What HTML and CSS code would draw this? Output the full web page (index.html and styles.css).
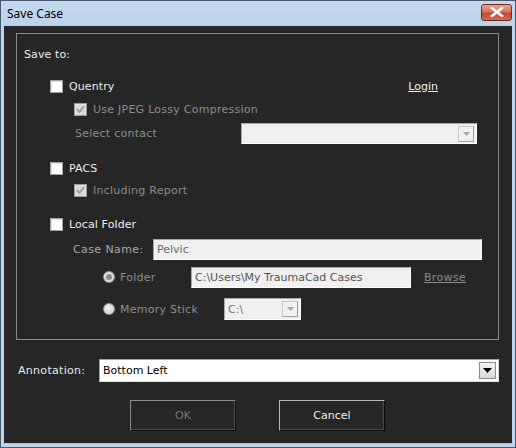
FILE: index.html
```html
<!DOCTYPE html>
<html>
<head>
<meta charset="utf-8">
<link rel="stylesheet" href="styles.css">
</head>
<body>
<div class="window">
  <div class="titlebar">
    <span class="title">Save Case</span>
    <span class="close"><svg width="14" height="10" viewBox="0 0 14 10"><path d="M2 1 L12 9 M12 1 L2 9" stroke="#fff" stroke-width="2.6" stroke-linecap="square"/></svg></span>
  </div>
  <div class="client">
    <div class="group">
      <div class="row r-saveto"><span class="label">Save to:</span></div>
      <div class="row r-quentry">
        <span class="cb"></span><span class="label">Quentry</span>
        <span class="link">Login</span>
      </div>
      <div class="row r-jpeg">
        <span class="cb dis"><svg width="11" height="11" viewBox="0 0 11 11"><path d="M2 5 L4.5 8 L9 2" stroke="#9a9a9a" stroke-width="1.8" fill="none"/></svg></span><span class="label dim">Use JPEG Lossy Compression</span>
      </div>
      <div class="row r-contact">
        <span class="label dim w-contact">Select contact</span>
        <span class="combo c-contact"><span class="combo-btn"><svg width="7" height="4" viewBox="0 0 7 4"><path d="M0 0 H7 L3.5 4 Z" fill="#a8a8a8"/></svg></span></span>
      </div>
      <div class="row r-pacs">
        <span class="cb"></span><span class="label">PACS</span>
      </div>
      <div class="row r-incl">
        <span class="cb dis"><svg width="11" height="11" viewBox="0 0 11 11"><path d="M2 5 L4.5 8 L9 2" stroke="#9a9a9a" stroke-width="1.8" fill="none"/></svg></span><span class="label dim">Including Report</span>
      </div>
      <div class="row r-local">
        <span class="cb"></span><span class="label">Local Folder</span>
      </div>
      <div class="row r-case">
        <span class="label dim2 w-case">Case Name:</span>
        <span class="field f-case">Pelvic</span>
      </div>
      <div class="row r-folder">
        <span class="radio sel"></span><span class="label dim w-folder">Folder</span>
        <span class="field f-folder">C:\Users\My TraumaCad Cases</span>
        <span class="link dimlink">Browse</span>
      </div>
      <div class="row r-mem">
        <span class="radio"></span><span class="label dim w-mem">Memory Stick</span>
        <span class="combo c-mem"><span class="combo-text">C:\</span><span class="combo-btn"><svg width="7" height="4" viewBox="0 0 7 4"><path d="M0 0 H7 L3.5 4 Z" fill="#a8a8a8"/></svg></span></span>
      </div>
    </div>
    <div class="annot">
      <span class="label w-annot">Annotation:</span>
      <span class="combo c-annot"><span class="combo-text">Bottom Left</span><span class="combo-btn dark"><svg width="9" height="5" viewBox="0 0 9 5"><path d="M0 0 H9 L4.5 5 Z" fill="#000"/></svg></span></span>
    </div>
    <div class="buttons">
      <span class="btn disabled">OK</span>
      <span class="btn">Cancel</span>
    </div>
  </div>
</div>
</body>
</html>
```
FILE: styles.css
```css
html, body { margin: 0; padding: 0; background: #262626; }
.window {
  width: 516px; height: 448px; box-sizing: border-box;
  display: flex; flex-direction: column;
  background: #bcd4ec;
  border: 1px solid #4a5a6a;
  font-family: "DejaVu Sans", Verdana, sans-serif;
  font-size: 11px;
}
.titlebar {
  height: 25px; display: flex; align-items: center; justify-content: space-between;
  padding: 0 3px 0 6px;
  background: linear-gradient(#c4daf0, #bad2ea);
}
.title { font-family: "Noto Sans", "Segoe UI", sans-serif; font-size: 12px; color: #000; margin-top: -1px; }
.close {
  width: 31px; height: 17px; margin-top: -3px; box-sizing: border-box;
  display: flex; align-items: center; justify-content: center;
  border: 1px solid #6e2a22; border-radius: 3px;
  background: linear-gradient(#e8a493 0%, #d5765e 45%, #c04a30 55%, #d26a50 100%);
}
.client {
  flex: 1; margin: 0 3px 3px 3px; background: #262626;
  display: flex; flex-direction: column;
  border-bottom: 1px solid #8fd0e0;
}
.group {
  margin: 7px 13px 0 12px; border: 1px solid #8a8a8a;
  height: 307px; box-sizing: border-box;
  padding: 10px 0 0 0; display: flex; flex-direction: column;
}
.row { display: flex; align-items: center; height: 20px; flex: none; }
.label { color: #ececec; white-space: nowrap; letter-spacing: 0.1px; }
.dim { color: #8c8c8c; letter-spacing: 0.25px; }
.dim2 { color: #a8a8a8; letter-spacing: 0.4px; }
.r-saveto { padding-left: 7px; }
.r-quentry { margin-top: 12px; padding-left: 33px; }
.r-jpeg { margin-top: 3px; padding-left: 57px; }
.r-contact { margin-top: 4px; padding-left: 58px; height: 21px; }
.r-pacs { margin-top: 14px; padding-left: 33px; }
.r-incl { margin-top: 2px; padding-left: 57px; }
.r-local { margin-top: 14px; padding-left: 33px; }
.r-case { margin-top: 5px; padding-left: 56px; }
.r-folder { margin-top: 8px; padding-left: 86px; }
.r-mem { margin-top: 11px; padding-left: 86px; height: 22px; }
.cb {
  width: 13px; height: 13px; box-sizing: border-box; flex: none;
  background: #fff; border: 1px solid #a0a0a0;
  box-shadow: inset 1px 1px 0 #e4e4e4;
  margin-right: 6px; display: flex; align-items: center; justify-content: center;
}
.cb.dis { background: #dcdcdc; border-color: #9a9a9a; }
.radio {
  width: 12px; height: 12px; border-radius: 50%; flex: none; box-sizing: border-box;
  background: radial-gradient(circle at 40% 40%, #f4f4f4, #c8c8c8);
  border: 1px solid #9a9a9a; margin-right: 5px; position: relative;
}
.radio.sel::after {
  content: ""; position: absolute; left: 2px; top: 2px; width: 6px; height: 6px;
  border-radius: 50%; background: #8a8a8a;
}
.link { color: #f2f2f2; text-decoration: underline; margin-left: auto; margin-right: 60px; }
.dimlink { color: #8a8a8a; margin-left: 13px; margin-right: 0; letter-spacing: 0.3px; }
.w-contact { width: 166px; }
.w-case { width: 80px; }
.w-folder { width: 71px; }
.w-mem { width: 104px; }
.combo {
  display: flex; align-items: center; box-sizing: border-box; height: 21px;
  background: #f0f0f0; border: 1px solid #a6a6a6; border-right-color: #fff; border-bottom-color: #fff;
}
.c-contact { width: 236px; justify-content: flex-end; padding-right: 2px; }
.c-mem { width: 77px; height: 22px; padding-right: 2px; }
.combo-text { flex: 1; padding-left: 3px; color: #707070; }
.combo-btn {
  width: 16px; height: 16px; box-sizing: border-box; display: flex; align-items: center; justify-content: center;
  background: #f2f2f2; border: 1px solid #c8c8c8; border-right-color: #a0a0a0; border-bottom-color: #a0a0a0;
}
.field {
  height: 21px; box-sizing: border-box; display: flex; align-items: center;
  background: #f0f0f0; border: 1px solid #a6a6a6; border-right-color: #fff; border-bottom-color: #fff;
  padding-left: 3px; color: #6a6a6a;
}
.f-case { width: 329px; }
.f-folder { width: 220px; color: #555; }
.annot { display: flex; align-items: center; height: 23px; margin-top: 19px; padding-left: 14px; }
.w-annot { width: 81px; letter-spacing: 0.3px; }
.c-annot { width: 400px; height: 23px; background: #fff; border: 1px solid #a0a0a0; border-right-color: #e0e0e0; border-bottom-color: #e0e0e0; padding-right: 2px; }
.c-annot .combo-text { color: #000; }
.combo-btn.dark { width: 17px; height: 17px; background: linear-gradient(#f4f4f4, #d8d8d8); border: 1px solid #8a8a8a; }
.buttons { display: flex; margin-top: 18px; padding-left: 126px; gap: 43px; }
.btn {
  width: 106px; height: 31px; box-sizing: border-box; display: flex; align-items: center; justify-content: center;
  border: 1px solid #b8b8b8; border-right-color: #0c0c0c; border-bottom-color: #0c0c0c;
  box-shadow: inset -1px -1px 0 #4a4a4a;
  color: #f0f0f0; background: #262626;
}
.btn.disabled { color: #7a7a7a; border-color: #8a8a8a #0c0c0c #0c0c0c #8a8a8a; }
```
